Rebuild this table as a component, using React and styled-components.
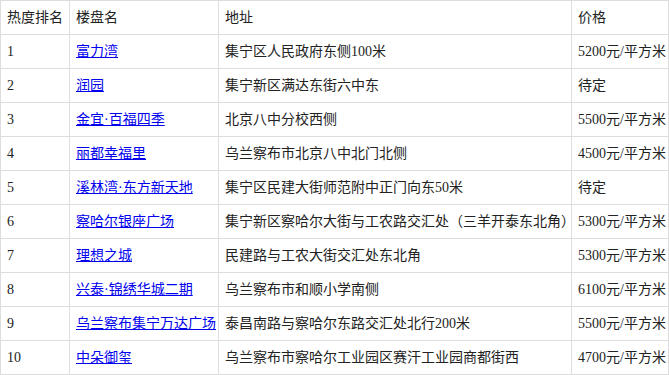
import React from "react";
import styled, { createGlobalStyle } from "styled-components";

const GlobalStyle = createGlobalStyle`
  html, body { margin: 0; padding: 0; background: #fff; }
  body { font-family: "Liberation Serif", "Noto Sans CJK SC", serif; }
`;

const Table = styled.table`
  border-collapse: collapse;
  table-layout: fixed;
  width: 668px;
  font-size: 14px;
  color: #222;
`;

const Row = styled.tr`
  height: 34px;
`;

const Cell = styled.td`
  border: 1px solid #ddd;
  padding: 0 6px;
  text-align: left;
  vertical-align: middle;
  white-space: nowrap;
  font-weight: normal;
  line-height: 18px;
`;

const HeadCell = styled(Cell).attrs({ as: "th" })``;

const Link = styled.a`
  color: #0000ee;
  text-decoration: underline;
`;

const rows = [
  ["1", "富力湾", "集宁区人民政府东侧100米", "5200元/平方米"],
  ["2", "润园", "集宁新区满达东街六中东", "待定"],
  ["3", "金宜·百福四季", "北京八中分校西侧", "5500元/平方米"],
  ["4", "丽都幸福里", "乌兰察布市北京八中北门北侧", "4500元/平方米"],
  ["5", "溪林湾·东方新天地", "集宁区民建大街师范附中正门向东50米", "待定"],
  ["6", "察哈尔银座广场", "集宁新区察哈尔大街与工农路交汇处（三羊开泰东北角）", "5300元/平方米"],
  ["7", "理想之城", "民建路与工农大街交汇处东北角", "5300元/平方米"],
  ["8", "兴泰·锦绣华城二期", "乌兰察布市和顺小学南侧", "6100元/平方米"],
  ["9", "乌兰察布集宁万达广场", "泰昌南路与察哈尔东路交汇处北行200米", "5500元/平方米"],
  ["10", "中朵御玺", "乌兰察布市察哈尔工业园区赛汗工业园商都街西", "4700元/平方米"],
];

export default function App() {
  return (
    <>
      <GlobalStyle />
      <Table>
        <colgroup>
          <col style={{ width: 69 }} />
          <col style={{ width: 149 }} />
          <col style={{ width: 353 }} />
          <col style={{ width: 97 }} />
        </colgroup>
        <thead>
          <Row>
            <HeadCell>热度排名</HeadCell>
            <HeadCell>楼盘名</HeadCell>
            <HeadCell>地址</HeadCell>
            <HeadCell>价格</HeadCell>
          </Row>
        </thead>
        <tbody>
          {rows.map((r) => (
            <Row key={r[0]}>
              <Cell>{r[0]}</Cell>
              <Cell>
                <Link href="#">{r[1]}</Link>
              </Cell>
              <Cell>{r[2]}</Cell>
              <Cell>{r[3]}</Cell>
            </Row>
          ))}
        </tbody>
      </Table>
    </>
  );
}
